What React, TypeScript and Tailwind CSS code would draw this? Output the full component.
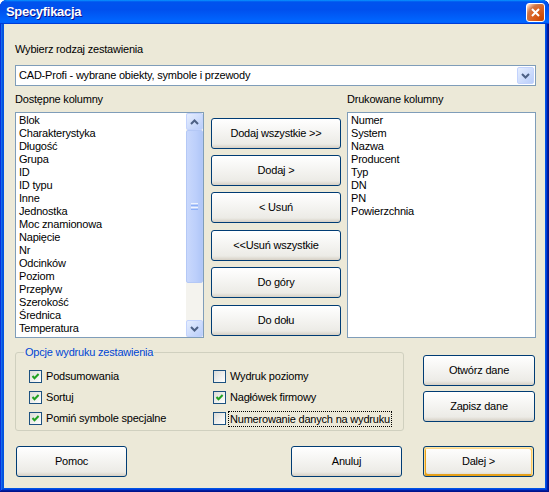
import type { ReactNode } from "react";

const available = [
  "Blok",
  "Charakterystyka",
  "Długość",
  "Grupa",
  "ID",
  "ID typu",
  "Inne",
  "Jednostka",
  "Moc znamionowa",
  "Napięcie",
  "Nr",
  "Odcinków",
  "Poziom",
  "Przepływ",
  "Szerokość",
  "Średnica",
  "Temperatura",
];

const printed = ["Numer", "System", "Nazwa", "Producent", "Typ", "DN", "PN", "Powierzchnia"];

const moveButtons = [
  { label: "Dodaj wszystkie >>", mt: "mt-[6px]" },
  { label: "Dodaj >", mt: "mt-[6px]" },
  { label: "< Usuń", mt: "mt-[6px]" },
  { label: "<<Usuń wszystkie", mt: "mt-[7px]" },
  { label: "Do góry", mt: "mt-[6px]" },
  { label: "Do dołu", mt: "mt-[7px]" },
];

function XpButton({
  children,
  className = "",
  focused = false,
}: {
  children: ReactNode;
  className?: string;
  focused?: boolean;
}) {
  return (
    <button
      type="button"
      className={`flex shrink-0 items-center justify-center rounded-[3px] border border-[#003c74] bg-[linear-gradient(180deg,#ffffff,#ecebe6_86%,#d6d0c5)] font-normal text-black ${
        focused
          ? "shadow-[inset_-1px_1px_#fce5a5,inset_1px_2px_#fdd889,inset_-2px_2px_#fbc761,inset_2px_-2px_#e5a01a]"
          : ""
      } ${className}`}
    >
      {children}
    </button>
  );
}

function Chevron({ up = false }: { up?: boolean }) {
  return (
    <svg width="9" height="6" viewBox="0 0 9 6" className={up ? "rotate-180" : ""}>
      <path d="M1 1 L4.5 4.5 L8 1" fill="none" stroke="#4d6185" strokeWidth="2" />
    </svg>
  );
}

function ArrowBox({ up = false }: { up?: boolean }) {
  return (
    <div className="flex h-[17px] w-[17px] shrink-0 items-center justify-center rounded-[2px] border border-[#c3d3fd] bg-[linear-gradient(135deg,#e6eefe,#b9cdfa)]">
      <Chevron up={up} />
    </div>
  );
}

function Check({ checked }: { checked: boolean }) {
  return (
    <div className="flex h-[13px] w-[13px] shrink-0 items-center justify-center border border-[#1c5180] bg-[linear-gradient(135deg,#dcdcd7,#ffffff)]">
      {checked && (
        <svg width="9" height="9" viewBox="0 0 9 9">
          <path d="M1.5 4 L3.5 6.2 L7.6 2" fill="none" stroke="#21a121" strokeWidth="2" />
        </svg>
      )}
    </div>
  );
}

function Option({ label, checked, focus = false }: { label: string; checked: boolean; focus?: boolean }) {
  return (
    <div className={`flex h-[21px] items-center ${focus ? "gap-[2px]" : "gap-[4px]"}`}>
      <Check checked={checked} />
      {focus ? (
        <span className="border border-dotted border-black px-[1px] leading-[14px]">{label}</span>
      ) : (
        <span>{label}</span>
      )}
    </div>
  );
}

export default function App() {
  return (
    <div className="h-[492px] w-[549px] bg-white font-['Liberation_Sans',Arial,sans-serif] text-[11px] tracking-[-0.2px] text-black">
      <div className="flex h-full w-full flex-col overflow-hidden rounded-t-[7px] bg-[#0054e3] shadow-[inset_-1px_-1px_#00138c,inset_1px_1px_#0831d9,inset_-2px_-2px_#001ea0,inset_2px_2px_#166aee,inset_-3px_-3px_#003bda,inset_3px_3px_#0855dd]">
        {/* Title bar */}
        <div className="flex h-[24px] shrink-0 items-center bg-[linear-gradient(180deg,#0997ff,#0053ee_8%,#0050ee_40%,#0066ff_88%,#0066ff_93%,#005bff_95%,#003dd7_96%,#003dd7)] pl-[6px] pr-[4px]">
          <span className="text-[13px] font-bold tracking-[-0.3px] text-white [text-shadow:1px_1px_#0f1089]">
            Specyfikacja
          </span>
          <div className="ml-auto flex h-[19px] w-[19px] items-center justify-center rounded-[3px] border border-white bg-[radial-gradient(circle_at_90%_90%,#cc4600_0%,#dc6527_55%,#cd7546_70%,#ffccb2_90%,#ffffff_100%)]">
            <svg width="9" height="9" viewBox="0 0 9 9">
              <path d="M1 1 L8 8 M8 1 L1 8" stroke="white" strokeWidth="2" />
            </svg>
          </div>
        </div>

        {/* Client area */}
        <div className="mx-[4px] mb-[4px] flex flex-1 flex-col bg-[#ece9d8] pl-[11px] pt-[19px]">
          <div className="h-[13px] leading-[13px]">Wybierz rodzaj zestawienia</div>

          <div className="mt-[9px] flex h-[21px] w-[521px] items-center border border-[#7f9db9] bg-white">
            <span className="pl-[3px]">CAD-Profi - wybrane obiekty, symbole i przewody</span>
            <div className="ml-auto mr-[1px]">
              <ArrowBox />
            </div>
          </div>

          <div className="mt-[7px] grid h-[13px] grid-cols-[189px_143px_189px] leading-[13px]">
            <span>Dostępne kolumny</span>
            <span />
            <span>Drukowane kolumny</span>
          </div>

          <div className="mt-[6px] flex h-[226px]">
            {/* Available list */}
            <div className="flex w-[189px] border border-[#7f9db9] bg-white">
              <div className="flex-1 pl-[3px] pt-[1px] leading-[13px]">
                {available.map((item) => (
                  <div key={item} className="h-[13px] whitespace-nowrap">
                    {item}
                  </div>
                ))}
              </div>
              <div className="flex w-[17px] flex-col bg-[#f4f3ee]">
                <ArrowBox up />
                <div className="flex h-[153px] items-center justify-center rounded-[2px] border border-[#b4c8f6] bg-[linear-gradient(90deg,#c9d8fc,#bccffb_60%,#b0c6f7)]">
                  <div className="flex flex-col gap-[1px]">
                    <div className="h-[1px] w-[7px] bg-[#eef4fe]" />
                    <div className="h-[1px] w-[7px] bg-[#8cb0f8]" />
                    <div className="h-[1px] w-[7px] bg-[#eef4fe]" />
                    <div className="h-[1px] w-[7px] bg-[#8cb0f8]" />
                  </div>
                </div>
                <div className="flex-1" />
                <ArrowBox />
              </div>
            </div>

            {/* Move buttons */}
            <div className="ml-[7px] flex w-[130px] flex-col">
              {moveButtons.map((b) => (
                <XpButton key={b.label} className={`h-[31px] w-[130px] ${b.mt}`}>
                  {b.label}
                </XpButton>
              ))}
            </div>

            {/* Printed list */}
            <div className="ml-[6px] w-[189px] border border-[#7f9db9] bg-white pl-[3px] pt-[1px] leading-[13px]">
              {printed.map((item) => (
                <div key={item} className="h-[13px]">
                  {item}
                </div>
              ))}
            </div>
          </div>

          <div className="mt-[14px] flex">
            {/* Options group */}
            <div className="relative h-[79px] w-[389px] rounded-[3px] border border-[#d0d0bf]">
              <span className="absolute left-[8px] top-[-7px] bg-[#ece9d8] px-[1px] leading-[13px] text-[#0046d5]">
                Opcje wydruku zestawienia
              </span>
              <div className="grid grid-cols-[184px_1fr] pl-[13px] pt-[13px]">
                <Option label="Podsumowania" checked />
                <Option label="Wydruk poziomy" checked={false} />
                <Option label="Sortuj" checked />
                <Option label="Nagłówek firmowy" checked />
                <Option label="Pomiń symbole specjalne" checked />
                <Option label="Numerowanie danych na wydruku" checked={false} focus />
              </div>
            </div>

            <div className="ml-[19px] flex w-[112px] flex-col gap-[5px] pt-[3px]">
              <XpButton className="h-[31px] w-[112px]">Otwórz dane</XpButton>
              <XpButton className="h-[31px] w-[112px]">Zapisz dane</XpButton>
            </div>
          </div>

          <div className="mt-[15px] flex">
            <XpButton className="ml-[1px] h-[31px] w-[111px]">Pomoc</XpButton>
            <XpButton className="ml-[164px] h-[31px] w-[111px]">Anuluj</XpButton>
            <XpButton focused className="ml-[21px] h-[31px] w-[111px]">
              {"Dalej >"}
            </XpButton>
          </div>
        </div>
      </div>
    </div>
  );
}
